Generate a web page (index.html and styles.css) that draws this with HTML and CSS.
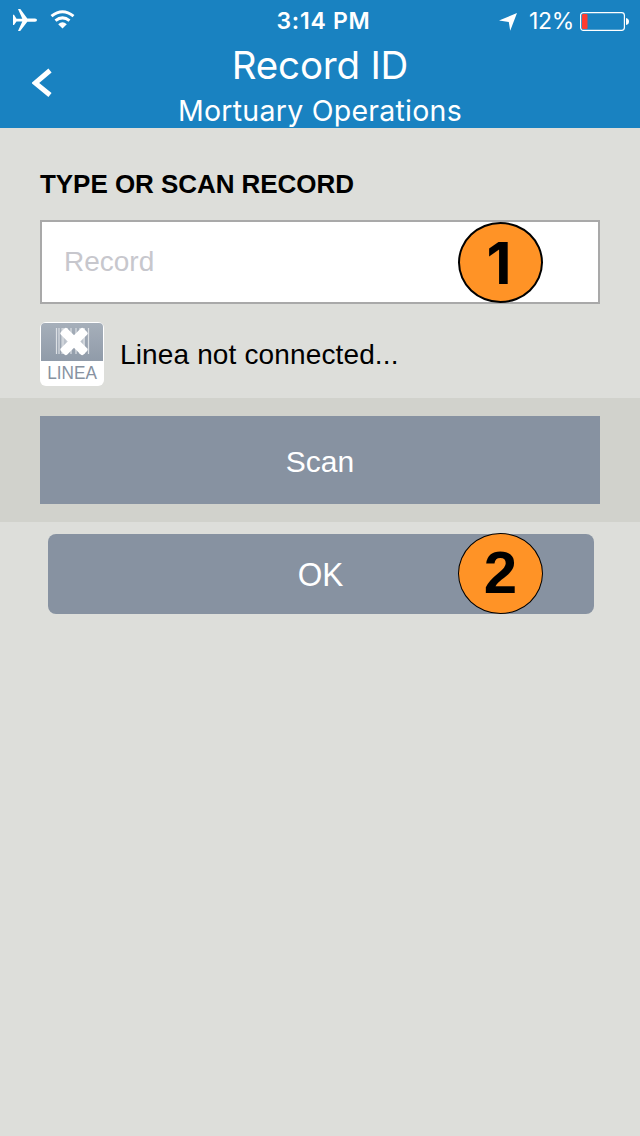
FILE: index.html
```html
<!DOCTYPE html>
<html lang="en">
<head>
<meta charset="utf-8">
<title>Record ID</title>
<link rel="stylesheet" href="styles.css">
</head>
<body>
<header class="header">
  <div class="status">
    <div class="status-left">
      <svg class="plane" width="24" height="23" viewBox="0 0 24 23"><path d="M0 5.800h1L3.500 9.700h5.800L5 0h2.300L14.300 9.400H22q2 .3 2 1.700t-2 1.700h-7.700L7.200 22H5L9.300 12.500H3.500L1 16H0z" fill="#fff"/></svg>
      <svg class="wifi" width="26" height="19" viewBox="0 0 26 19"><g fill="none" stroke="#fff" stroke-width="3"><path d="M1.500 6.200Q12.500-2.600 23.500 6.200"/><path d="M5.500 10.700Q12.500 5 19.500 10.700"/></g><path d="M8.200 14.200q4.300-3.800 8.600 0L12.500 18.500z" fill="#fff"/></svg>
    </div>
    <time class="clock">3:14 PM</time>
    <div class="status-right">
      <svg width="18" height="18" viewBox="0 0 18 18"><path d="M18 0 11.200 17.800 9.800 9 0 7.600z" fill="#fff"/></svg>
      <span class="percent">12%</span>
      <svg class="battery" width="49" height="19" viewBox="0 0 49 19"><rect x=".6" y=".6" width="43.800" height="17.800" rx="2.800" fill="none" stroke="#fff" stroke-width="1.200"/><rect x="2" y="2" width="5.500" height="15" rx="1" fill="#ff3b30"/><path d="M46 6q3 .5 3 3.500t-3 3.500z" fill="#fff"/></svg>
    </div>
  </div>
  <div class="nav">
    <svg class="back" width="21" height="30" viewBox="0 0 21 30"><path d="M18 2.500 3.200 15 18 27" fill="none" stroke="#fff" stroke-width="5"/></svg>
    <div class="titles">
      <h1 class="title">Record ID</h1>
      <p class="subtitle"><span>Mortuary Operations</span></p>
    </div>
  </div>
</header>
<main>
  <section class="record">
    <h2 class="label"><span>TYPE OR SCAN RECORD</span></h2>
    <div class="field">
      <span class="placeholder">Record</span>
      <div class="marker field-marker"><span class="one">1</span></div>
    </div>
    <div class="device">
      <div class="badge">
        <svg class="badge-art" width="62" height="38" viewBox="0 0 62 38">
          <defs><linearGradient id="g" x2="0" y2="1"><stop stop-color="#a6afba"/><stop offset="1" stop-color="#909ba9"/></linearGradient></defs>
          <path d="M0 38V4q0-4 4-4h54q4 0 4 4v34z" fill="url(#g)"/>
          <path d="M15.500 5v26M18 5v26M22 5v26M26 5v26M30 5v26M35 5v26M39 5v26M43 5v26M47.500 5v26" stroke="#dce0e4" stroke-width="1.200"/>
          <path d="M20 5h5v26h-5zM40 5h4v26h-4z" fill="#dce0e4" opacity=".5"/>
          <g fill="#fff" transform="translate(33 18.500) rotate(45)"><rect x="-16" y="-4.500" width="32" height="9" rx="2"/><rect x="-4.500" y="-16" width="9" height="32" rx="2"/></g>
        </svg>
        <span class="badge-text">LINEA</span>
      </div>
      <span class="device-state">Linea not connected...</span>
    </div>
  </section>
  <section class="scan-bar"><div class="scan"><span>Scan</span></div></section>
  <div class="ok"><span class="ok-text">OK</span><div class="marker ok-marker"><span>2</span></div></div>
</main>
</body>
</html>
```
FILE: styles.css
```css
* { box-sizing: border-box; }
body { margin: 0; min-height: 1136px; background: #dddeda; color: #000; font-family: "Liberation Sans", Arial, sans-serif; }
h1, h2, p { margin: 0; }
svg { display: block; flex: none; }
.header { height: 128px; background: #1982c1; color: #fff; font-family: Inter, sans-serif; }
.status { height: 40px; display: grid; grid-template-columns: 240px 1fr 240px; }
.status-left { display: flex; align-items: flex-start; gap: 13px; padding: 9px 0 0 13px; }
.wifi { margin-top: 1px; }
.clock { padding-left: 7px; text-align: center; font-size: 23px; font-weight: 600; line-height: 42px; letter-spacing: 0.75px; white-space: nowrap; }
.status-right { display: flex; align-items: center; justify-content: flex-end; padding: 1px 11px 0 0; }
.percent { width: 45px; margin: -2px 6px 0 12px; font-size: 23px; font-weight: 400; letter-spacing: -0.3px; white-space: nowrap; }
.nav { display: grid; grid-template-columns: 80px 1fr 80px; height: 88px; }
.back { margin: 28px 0 0 32px; }
.titles { text-align: center; white-space: nowrap; }
.title { height: 50px; line-height: 50px; font-size: 38.5px; font-weight: 400; letter-spacing: -0.2px; }
.subtitle { height: 38px; line-height: 41px; font-size: 28.5px; font-weight: 400; letter-spacing: 0.25px; }
.record { height: 270px; padding: 40px 40px 0; }
.label { height: 52px; line-height: 32px; font-size: 26px; letter-spacing: -0.05px; }
.field { position: relative; height: 84px; border: 2px solid #a9a9a9; background: #fff; padding-left: 22px; line-height: 80px; }
.placeholder { font-size: 28px; color: #c7c7cd; }
.marker { position: absolute; width: 85px; height: 81px; border: 2px solid #000; border-radius: 50%; background: #ff9326; color: #000; font-size: 60px; font-weight: 700; line-height: 77px; text-align: center; }
.field-marker { left: 416px; top: 0; padding-right: 3px; font-family: Inter, sans-serif; font-size: 58px; line-height: 79px; }
.ok-marker { left: 410px; top: -1px; border-width: 1px; }
.device { display: flex; align-items: center; gap: 16px; padding-top: 18px; }
.badge { width: 64px; height: 64px; padding: 1px; border-radius: 6px; background: #fff; }
.badge-text { display: block; text-align: center; font-size: 18.5px; line-height: 24px; color: #8792a1; transform: scaleX(0.93); }
.device-state { padding-top: 2px; font-size: 28px; letter-spacing: 0.14px; white-space: nowrap; }
.scan-bar { height: 124px; padding: 18px 40px; background: #d1d2cc; }
.scan { height: 88px; line-height: 91px; text-align: center; font-size: 30px; color: #fff; background: #8792a1; }
.ok { position: relative; height: 80px; margin: 12px 46px 0 48px; border-radius: 8px; background: #8792a1; color: #fff; text-align: center; line-height: 80px; font-size: 34px; }
.ok-text { display: inline-block; transform: scaleX(0.93); }
```
